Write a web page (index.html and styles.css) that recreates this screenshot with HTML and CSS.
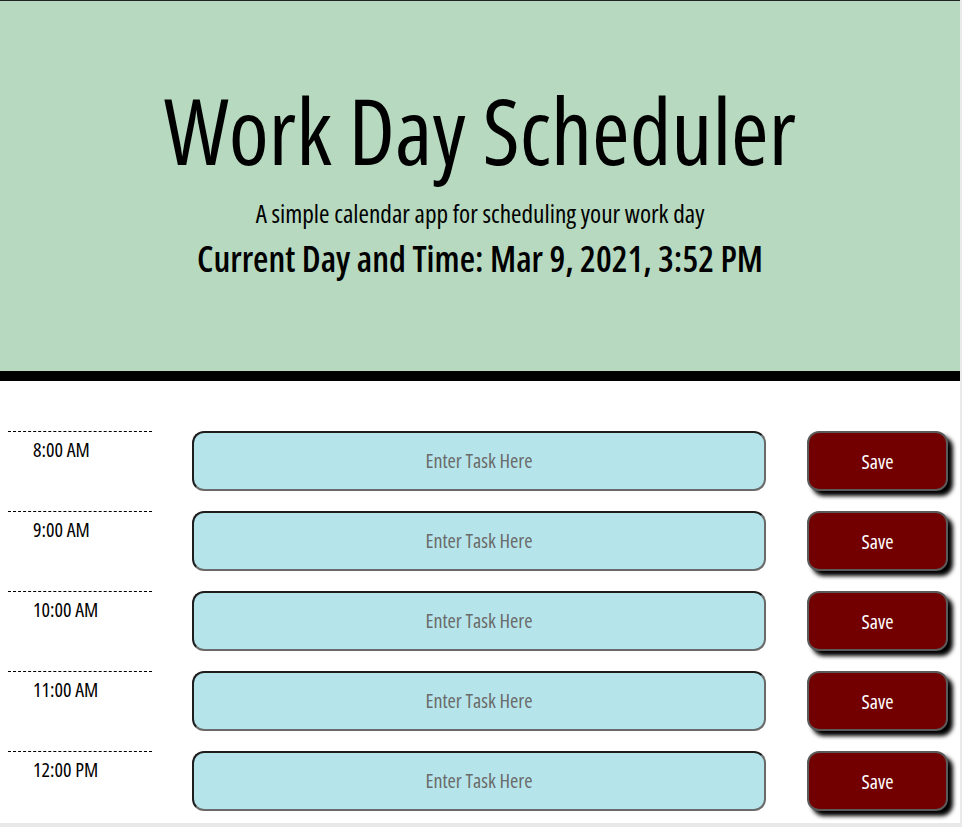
FILE: index.html
```html
<!DOCTYPE html>
<html lang="en">
<head>
<meta charset="utf-8">
<title>Work Day Scheduler</title>
<link rel="stylesheet" href="styles.css">
</head>
<body>
<header class="jumbotron">
  <h1 class="title">Work Day Scheduler</h1>
  <p class="lead">A simple calendar app for scheduling your work day</p>
  <p class="current-day">Current Day and Time: Mar 9, 2021, 3:52 PM</p>
</header>
<main class="container">
  <div class="time-block">
    <div class="hour">8:00 AM</div>
    <textarea class="description" placeholder="Enter Task Here"></textarea>
    <button class="save-btn">Save</button>
  </div>
  <div class="time-block">
    <div class="hour">9:00 AM</div>
    <textarea class="description" placeholder="Enter Task Here"></textarea>
    <button class="save-btn">Save</button>
  </div>
  <div class="time-block">
    <div class="hour">10:00 AM</div>
    <textarea class="description" placeholder="Enter Task Here"></textarea>
    <button class="save-btn">Save</button>
  </div>
  <div class="time-block">
    <div class="hour">11:00 AM</div>
    <textarea class="description" placeholder="Enter Task Here"></textarea>
    <button class="save-btn">Save</button>
  </div>
  <div class="time-block">
    <div class="hour">12:00 PM</div>
    <textarea class="description" placeholder="Enter Task Here"></textarea>
    <button class="save-btn">Save</button>
  </div>
</main>
</body>
</html>
```
FILE: styles.css
```css
html {
  background: #e9e9e9;
}
body {
  margin: 0 2px 0 0;
  background: #ffffff;
  font-family: "Open Sans", "Noto Sans", sans-serif;
  font-stretch: 75%;
  color: #000;
}
.jumbotron {
  box-sizing: border-box;
  height: 381px;
  border-top: 1px solid #222;
  border-bottom: 10px solid #000;
  background: #b6d9bf;
  padding-top: 79px;
  text-align: center;
}
.title {
  margin: 0;
  font-size: 91px;
  line-height: 100px;
  font-weight: 400;
}
.lead {
  margin: 18px 0 0;
  font-size: 25.3px;
  line-height: 30px;
  font-weight: 400;
}
.current-day {
  margin: 10px 0 0;
  font-size: 35.3px;
  line-height: 40px;
  font-weight: 600;
}
.container {
  padding: 50px 0 12px 8px;
  display: flex;
  flex-direction: column;
  gap: 20px;
}
.time-block {
  display: grid;
  grid-template-columns: 144px 574px 142px;
  column-gap: 40px;
  height: 60px;
}
.time-block .save-btn {
  margin-left: 1px;
}
.hour {
  border-top: 1px dashed #000;
  padding: 6px 0 0 25px;
  font-size: 20px;
  line-height: 24px;
}
.description {
  box-sizing: border-box;
  height: 60px;
  margin: 0;
  resize: none;
  background: #b5e5ea;
  border: 2px solid;
  border-color: #1e1e1e #6a6a6a #6a6a6a #1e1e1e;
  border-radius: 12px;
  padding: 16px 10px 0;
  font-family: inherit;
  font-stretch: 75%;
  font-size: 20px;
  line-height: 24px;
  text-align: center;
  color: #333;
  overflow: hidden;
}
.description::placeholder {
  color: #6b6b6b;
}
.save-btn {
  box-sizing: border-box;
  height: 60px;
  background: #730000;
  border: 2px solid #5a5a5a;
  border-radius: 12px;
  box-shadow: 5px 5px 4px #000;
  color: #fff;
  font-family: inherit;
  font-stretch: 75%;
  font-size: 20px;
  font-weight: 500;
  padding: 0;
}
```
